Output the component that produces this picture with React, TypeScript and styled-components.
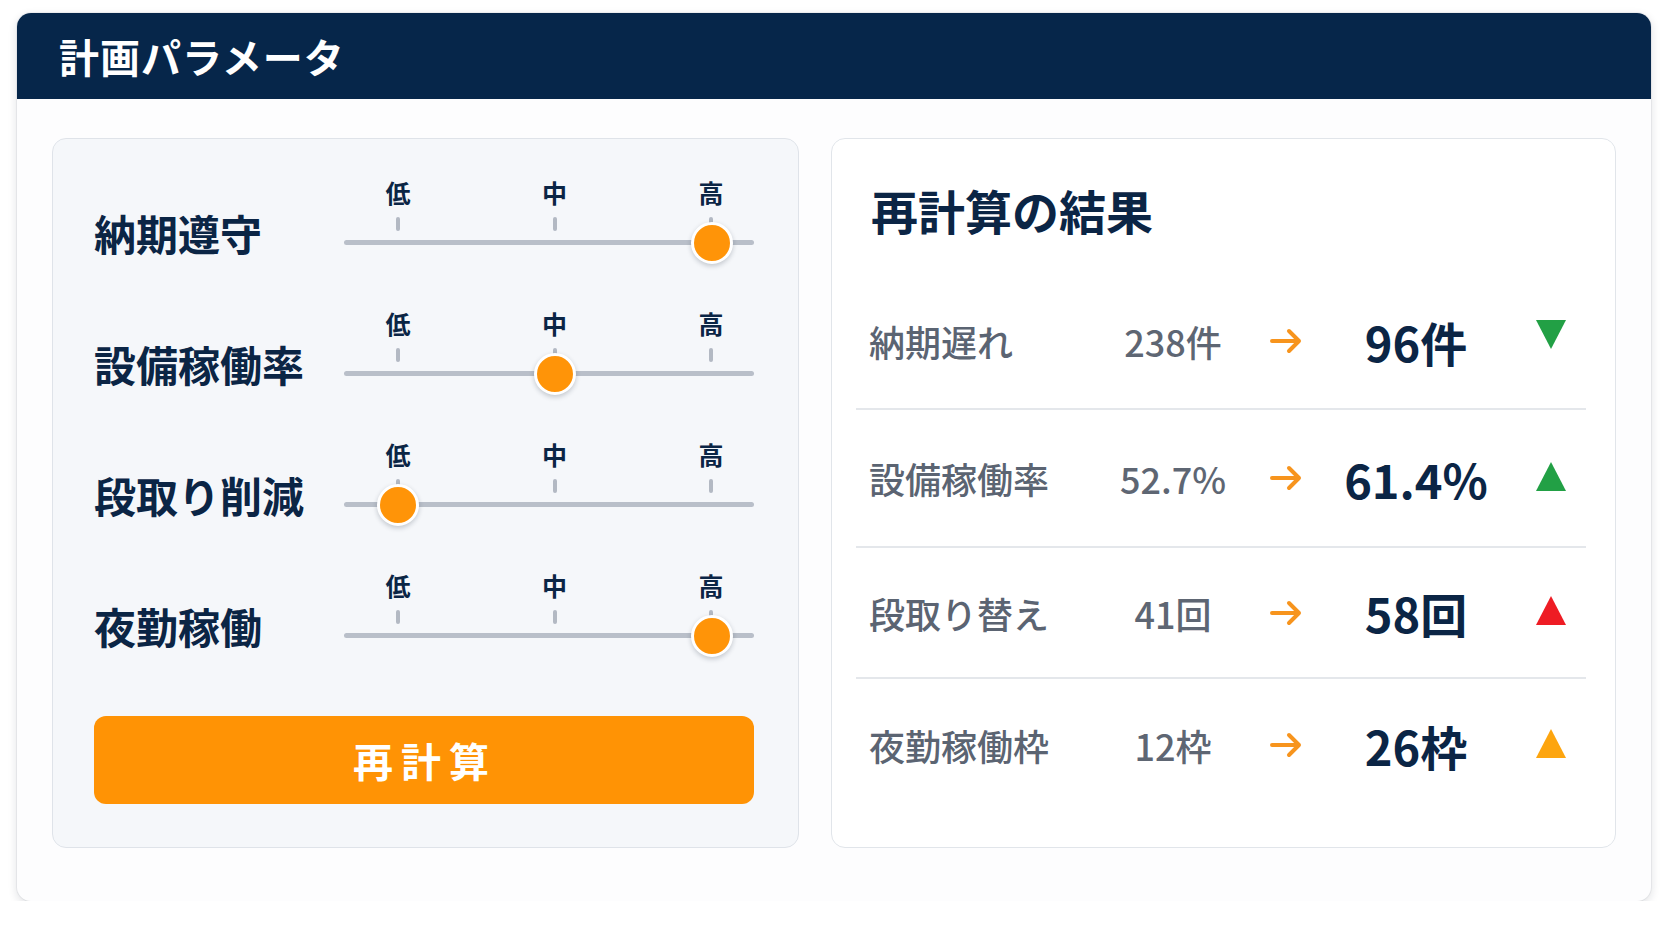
import React from 'react';
import styled, { createGlobalStyle } from 'styled-components';

const GlobalStyle = createGlobalStyle`
  html, body {
    margin: 0;
    padding: 0;
    background: #ffffff;
  }
  body {
    font-family: "Noto Sans CJK JP", "Noto Sans", sans-serif;
  }
`;

const Page = styled.div`
  padding: 13px 0 0 17px;
`;

const Card = styled.div`
  width: 1634px;
  height: 888px;
  background: #fdfdfe;
  border-radius: 14px;
  overflow: hidden;
  box-shadow: 0 3px 10px rgba(20, 30, 50, 0.14), 0 0 0 1px rgba(20, 30, 50, 0.05);
  display: flex;
  flex-direction: column;
`;

const Header = styled.div`
  height: 86px;
  background: #06264a;
  display: flex;
  align-items: center;
  padding-left: 42px;
  box-sizing: border-box;
`;

const HeaderTitle = styled.h1`
  margin: 0;
  color: #ffffff;
  font-size: 40px;
  font-weight: 700;
  letter-spacing: 1px;
`;

const Body = styled.div`
  display: flex;
  gap: 32px;
  padding: 39px 35px 0 35px;
`;

const ParamPanel = styled.div`
  width: 747px;
  height: 710px;
  box-sizing: border-box;
  background: #f5f7fa;
  border: 1px solid #dfe3e9;
  border-radius: 14px;
  padding: 33px 44px 0 41px;
  display: flex;
  flex-direction: column;
`;

const ParamRow = styled.div`
  display: grid;
  grid-template-columns: 250px 410px;
  height: 131px;
`;

const ParamLabel = styled.div`
  margin-top: 36px;
  line-height: 50px;
  height: 50px;
  font-size: 42px;
  font-weight: 700;
  color: #0b2545;
  white-space: nowrap;
`;

const Slider = styled.div`
  position: relative;
  height: 131px;
`;

const Stops = styled.div`
  display: flex;
  justify-content: space-between;
  padding: 5px 23px 0 34px;
`;

const Stop = styled.div`
  width: 40px;
  display: flex;
  flex-direction: column;
  align-items: center;
`;

const StopLabel = styled.span`
  font-size: 25px;
  line-height: 30px;
  font-weight: 700;
  color: #0b2545;
`;

const Tick = styled.span`
  margin-top: 10px;
  width: 4px;
  height: 14px;
  border-radius: 2px;
  background: #b3b9c3;
`;

const Track = styled.div`
  margin-top: 9px;
  height: 5px;
  border-radius: 3px;
  background: #b9bfc9;
`;

const Thumb = styled.div`
  position: absolute;
  top: 50px;
  width: 36px;
  height: 36px;
  border-radius: 50%;
  background: #ff9408;
  border: 3px solid #ffffff;
  box-shadow: 0 2px 5px rgba(20, 30, 50, 0.22);
`;

const RunButton = styled.button`
  margin-top: 20px;
  width: 660px;
  height: 88px;
  border: none;
  border-radius: 12px;
  background: #ff9305;
  color: #ffffff;
  font-family: inherit;
  font-size: 40px;
  font-weight: 700;
  letter-spacing: 8px;
  padding-left: 8px;
  cursor: pointer;
`;

const ResultPanel = styled.div`
  flex: 1;
  height: 710px;
  box-sizing: border-box;
  background: #ffffff;
  border: 1px solid #e1e5ea;
  border-radius: 14px;
  padding: 43px 29px 0 24px;
`;

const ResultTitle = styled.h2`
  margin: 0 0 36px 15px;
  font-size: 47px;
  line-height: 56px;
  font-weight: 700;
  color: #0b2545;
`;

const ResultRow = styled.div<{ $h: number; $last?: boolean }>`
  display: grid;
  grid-template-columns: 240px 128px 98px 162px 1fr;
  align-items: center;
  height: ${(p) => p.$h}px;
  padding: 0 20px 0 13px;
  box-sizing: border-box;
  border-bottom: ${(p) => (p.$last ? 'none' : '2px solid #e4e7eb')};
`;

const ResultLabel = styled.span`
  font-size: 36px;
  font-weight: 500;
  color: #5b6472;
  white-space: nowrap;
`;

const OldValue = styled.span`
  justify-self: center;
  font-size: 36px;
  font-weight: 500;
  color: #5e6673;
  white-space: nowrap;
`;

const NewValue = styled.span`
  justify-self: center;
  font-size: 47px;
  font-weight: 700;
  color: #0b2545;
  white-space: nowrap;
`;

const Cell = styled.span`
  justify-self: center;
  display: flex;
`;

const TrendCell = styled.span<{ $raise: number }>`
  justify-self: end;
  display: flex;
  margin-bottom: ${(p) => p.$raise}px;
`;

const Arrow = () => (
  <svg width="33" height="26" viewBox="0 0 33 26">
    <path d="M2 13 H29 M19 3 L29 13 L19 23" fill="none" stroke="#f7941d" strokeWidth="4" strokeLinecap="round" strokeLinejoin="round" />
  </svg>
);

const Trend = ({ dir, color }: { dir: 'up' | 'down'; color: string }) => (
  <svg width="30" height="29" viewBox="0 0 30 29">
    {dir === 'up' ? <polygon points="15,0 30,29 0,29" fill={color} /> : <polygon points="0,0 30,0 15,29" fill={color} />}
  </svg>
);

const levels = ['低', '中', '高'];

const params = [
  { label: '納期遵守', value: 2 },
  { label: '設備稼働率', value: 1 },
  { label: '段取り削減', value: 0 },
  { label: '夜勤稼働', value: 2 },
];

const results = [
  { label: '納期遅れ', before: '238件', after: '96件', dir: 'down' as const, color: '#22a045', h: 136 },
  { label: '設備稼働率', before: '52.7%', after: '61.4%', dir: 'up' as const, color: '#22a045', h: 138 },
  { label: '段取り替え', before: '41回', after: '58回', dir: 'up' as const, color: '#ee1c24', h: 131 },
  { label: '夜勤稼働枠', before: '12枠', after: '26枠', dir: 'up' as const, color: '#fda50f', h: 132 },
];

// tick centres inside the 410px slider
const stopX = (i: number) => 54 + i * 157;

const App: React.FC = () => {
  return (
    <>
      <GlobalStyle />
      <Page>
        <Card>
          <Header>
            <HeaderTitle>計画パラメータ</HeaderTitle>
          </Header>
          <Body>
            <ParamPanel>
              {params.map((p) => (
                <ParamRow key={p.label}>
                  <ParamLabel>{p.label}</ParamLabel>
                  <Slider>
                    <Stops>
                      {levels.map((l) => (
                        <Stop key={l}>
                          <StopLabel>{l}</StopLabel>
                          <Tick />
                        </Stop>
                      ))}
                    </Stops>
                    <Track />
                    <Thumb style={{ left: stopX(p.value) - 21 }} />
                  </Slider>
                </ParamRow>
              ))}
              <RunButton>再計算</RunButton>
            </ParamPanel>
            <ResultPanel>
              <ResultTitle>再計算の結果</ResultTitle>
              {results.map((r, i) => (
                <ResultRow key={r.label} $h={r.h} $last={i === results.length - 1}>
                  <ResultLabel>{r.label}</ResultLabel>
                  <OldValue>{r.before}</OldValue>
                  <Cell>
                    <Arrow />
                  </Cell>
                  <NewValue>{r.after}</NewValue>
                  <TrendCell $raise={r.dir === 'down' ? 14 : 4}>
                    <Trend dir={r.dir} color={r.color} />
                  </TrendCell>
                </ResultRow>
              ))}
            </ResultPanel>
          </Body>
        </Card>
      </Page>
    </>
  );
};

export default App;
